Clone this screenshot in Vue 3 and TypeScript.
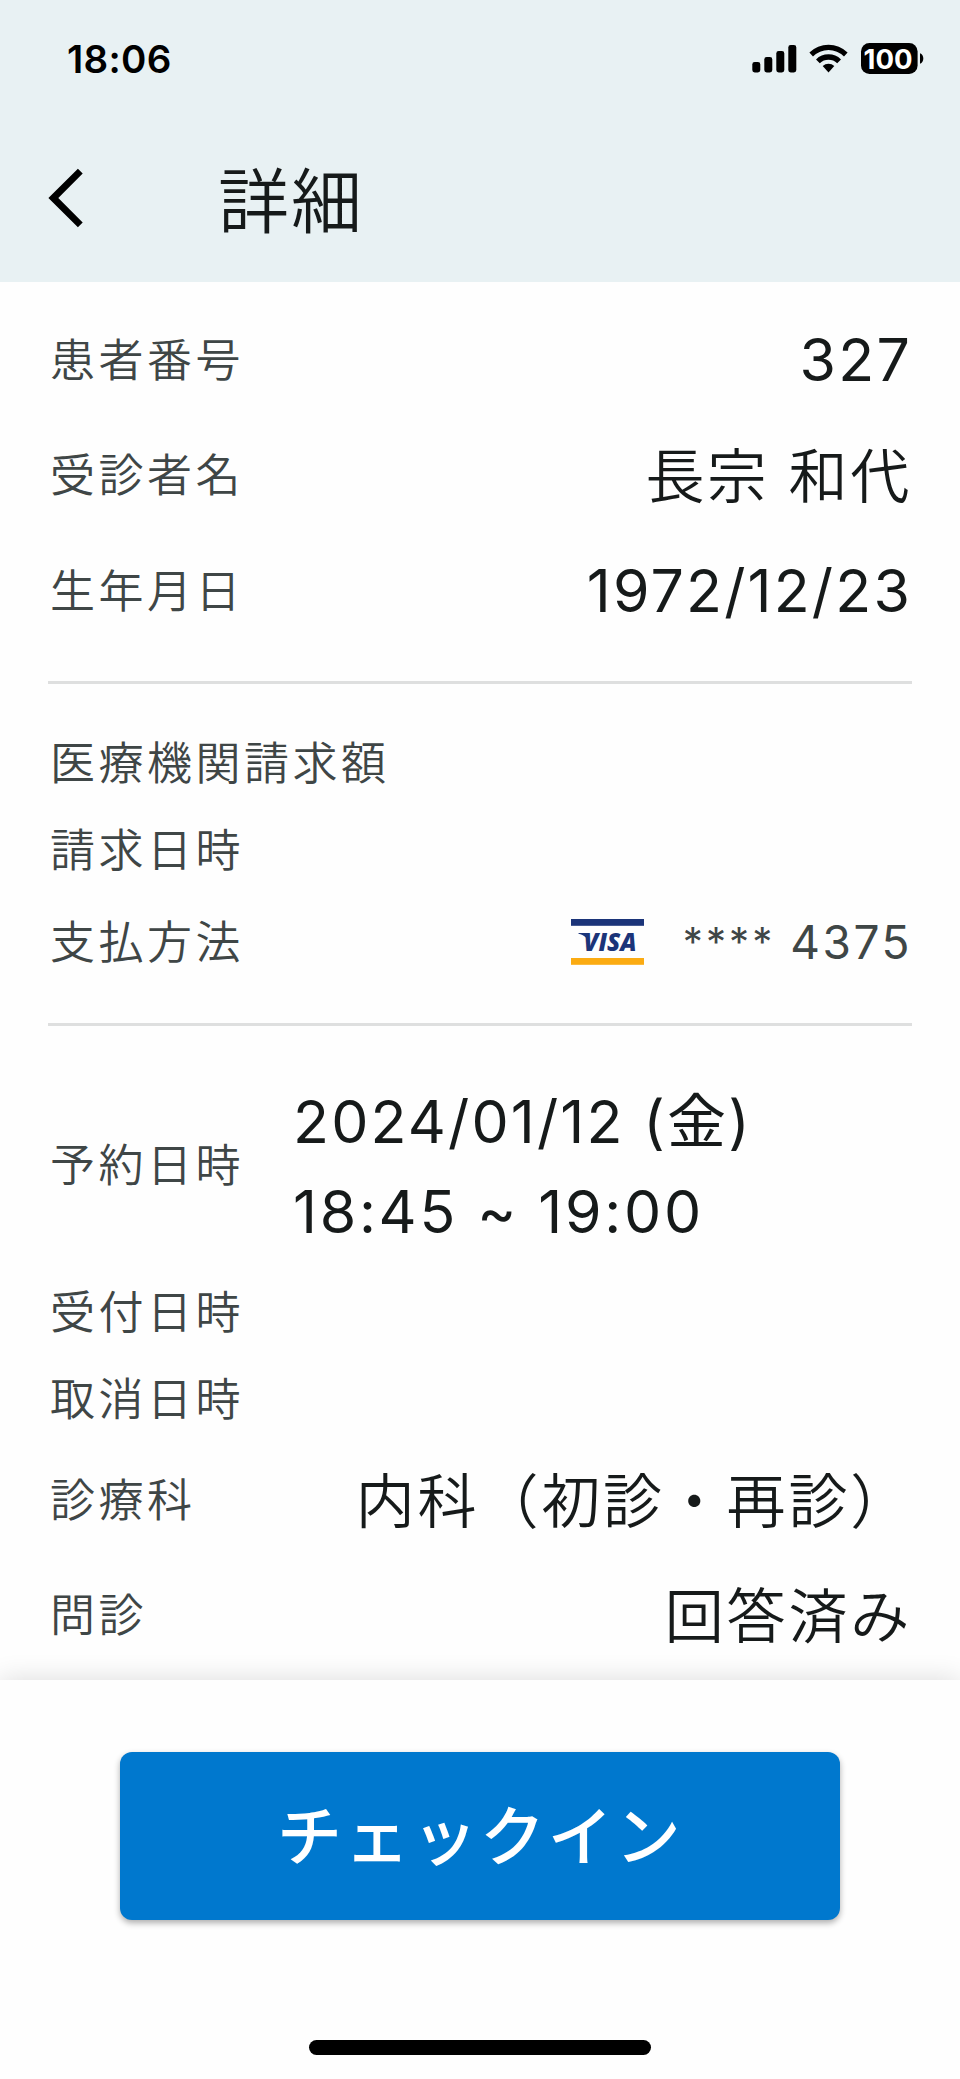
<script setup lang="ts">
interface Row {
  label: string
  kind: 'tall' | 'short' | 'card' | 'slot'
  lines?: string[]
  tone?: 'date' | 'text'
}

const sections: Row[][] = [
  [
    { label: '患者番号', kind: 'tall', lines: ['327'] },
    { label: '受診者名', kind: 'tall', lines: ['長宗 和代'], tone: 'text' },
    { label: '生年月日', kind: 'tall', lines: ['1972/12/23'], tone: 'date' },
  ],
  [
    { label: '医療機関請求額', kind: 'short' },
    { label: '請求日時', kind: 'short' },
    { label: '支払方法', kind: 'card' },
  ],
  [
    { label: '予約日時', kind: 'slot', lines: ['2024/01/12 (金)', '18:45 ~ 19:00'] },
    { label: '受付日時', kind: 'short' },
    { label: '取消日時', kind: 'short' },
    { label: '診療科', kind: 'tall', lines: ['内科（初診・再診）'], tone: 'text' },
    { label: '問診', kind: 'tall', lines: ['回答済み'], tone: 'text' },
  ],
]
</script>

<template>
  <div class="screen">
    <header class="top">
      <div class="status">
        <span class="clock">18:06</span>
        <svg class="indicators" width="176" height="36" viewBox="0 0 176 36">
          <rect x="2.3" y="22" width="8" height="10.5" rx="2.4" />
          <rect x="14.3" y="17" width="8" height="15.5" rx="2.4" />
          <rect x="26.3" y="11" width="8" height="21.5" rx="2.4" />
          <rect x="38.3" y="5" width="8" height="27.5" rx="2.4" />
          <path d="M59.4 12.6A27 27 0 0 1 97.6 12.6L94 16.4A22 22 0 0 0 63 16.4Z" />
          <path d="M66 19.4A18 18 0 0 1 91 19.4L87.2 23.2A12.6 12.6 0 0 0 69.8 23.2Z" />
          <path d="M72.7 26A8.6 8.6 0 0 1 84.3 26L78.5 32.6Z" />
          <rect x="111" y="3" width="56.6" height="31" rx="8.5" />
          <path d="M170 13.2C174.4 14.4 174.4 22.6 170 23.8Z" />
          <text class="level" x="113.6" y="28.6" textLength="49" lengthAdjust="spacingAndGlyphs">100</text>
        </svg>
      </div>
      <div class="bar">
        <svg class="back" width="36" height="60" viewBox="0 0 36 60">
          <path d="M29.9 .7 34.7 5.4 10.3 30 34.7 54.4 29.9 59.3 .4 30Z" />
        </svg>
        <h1 class="title">詳細</h1>
      </div>
    </header>

    <main class="details">
      <section v-for="(rows, i) in sections" :key="i" class="section">
        <div v-for="row in rows" :key="row.label" class="row" :class="row.kind">
          <span class="label">{{ row.label }}</span>
          <div v-if="row.kind === 'card'" class="payment">
            <svg class="visa" width="73" height="46" viewBox="0 0 73 46">
              <rect width="73" height="6.8" fill="#1b3479" />
              <rect y="39" width="73" height="6.8" fill="#fbab12" />
              <path d="M7.5 14H15L19 25C17 19.5 13 16 7.5 14.8Z" fill="#1b3479" />
              <text class="brand" x="12.5" y="32" textLength="53" lengthAdjust="spacingAndGlyphs">VISA</text>
            </svg>
            <span class="stars">****</span>
            <span class="digits">4375</span>
          </div>
          <div v-else-if="row.lines" class="value" :class="row.tone">
            <div v-for="line in row.lines" :key="line" class="line">{{ line }}</div>
          </div>
        </div>
      </section>
    </main>

    <footer class="footer">
      <button class="checkin" type="button">チェックイン</button>
      <div class="home"></div>
    </footer>
  </div>
</template>

<style>
body {
  margin: 0;
  background: #fefefe;
}
</style>

<style scoped>
.screen {
  width: 960px;
  height: 2079px;
  display: flex;
  flex-direction: column;
  overflow: hidden;
  background: #fefefe;
  color: #161a1a;
  font-family: Inter, "Noto Sans CJK JP", sans-serif;
}
.top {
  height: 282px;
  flex: none;
  background: #e8f1f3;
}
.status {
  height: 118px;
  box-sizing: border-box;
  padding: 0 34px 0 67px;
  display: flex;
  align-items: center;
  justify-content: space-between;
}
.clock {
  color: #000;
  font-size: 38.5px;
  font-weight: 600;
  line-height: 40px;
  letter-spacing: 0.3px;
}
.indicators {
  display: block;
  margin-bottom: 2px;
}
.level {
  fill: #fff;
  font-size: 27px;
  font-weight: 700;
}
.bar {
  height: 160px;
  display: flex;
  align-items: center;
  padding-left: 48px;
}
.title {
  margin: 0 0 4px 134px;
  font-family: "Noto Sans CJK JP", sans-serif;
  font-size: 71px;
  font-weight: 350;
  line-height: 100px;
  letter-spacing: 2px;
}
.details {
  height: 1398px;
  flex: none;
  box-sizing: border-box;
  padding: 20px 48px 0;
}
.section {
  padding-bottom: 33px;
}
.section + .section {
  border-top: 3px solid #dedfdf;
  padding-top: 35px;
  padding-bottom: 32px;
}
.row {
  display: flex;
  align-items: center;
  justify-content: space-between;
  padding-left: 2px;
}
.tall {
  height: 115.3px;
}
.short {
  height: 87px;
}
.card {
  height: 98px;
}
.slot {
  height: 207px;
  justify-content: flex-start;
}
.label {
  margin-bottom: 3px;
  color: #3f4646;
  font-family: "Noto Sans CJK JP", sans-serif;
  font-size: 45px;
  font-weight: 350;
  line-height: 64px;
  letter-spacing: 3.5px;
  white-space: nowrap;
}
.value {
  font-size: 59px;
  font-weight: 385;
  line-height: 90px;
  letter-spacing: 2.2px;
  white-space: nowrap;
}
.value.text {
  padding-top: 4px;
  font-weight: 350;
  letter-spacing: 2.8px;
}
.value.date {
  padding-top: 2px;
  letter-spacing: 2.15px;
}
.slot .value {
  margin-left: 49px;
  padding-top: 5px;
}
.slot .line {
  letter-spacing: 2.15px;
}
.slot .line + .line {
  letter-spacing: 2.7px;
}
.payment {
  display: flex;
  align-items: center;
  color: #3f4646;
  font-size: 46px;
  font-weight: 385;
  line-height: 64px;
  letter-spacing: 2.5px;
}
.visa {
  margin-right: 39px;
}
.brand {
  fill: #1b3479;
  font-family: "Open Sans", sans-serif;
  font-size: 25px;
  font-style: italic;
  font-weight: 800;
  letter-spacing: 0;
}
.stars {
  margin-right: 15px;
  font-size: 40px;
  letter-spacing: 3.1px;
}
.footer {
  flex: 1;
  display: flex;
  flex-direction: column;
  align-items: center;
  background: #fefefe;
  box-shadow: 0 0 26px rgba(0, 0, 0, 0.14);
}
.checkin {
  width: 720px;
  height: 168px;
  margin-top: 72px;
  padding: 0 0 8px;
  border: 0;
  border-radius: 12px;
  background: #0078ce;
  color: #fff;
  box-shadow: 0 3px 6px rgba(0, 0, 0, 0.32);
  font-family: "Noto Sans CJK JP", sans-serif;
  font-size: 65px;
  font-weight: 500;
  line-height: 90px;
  letter-spacing: 2.7px;
}
.home {
  width: 342px;
  height: 15px;
  margin-top: 120px;
  border-radius: 8px;
  background: #000;
}
</style>
